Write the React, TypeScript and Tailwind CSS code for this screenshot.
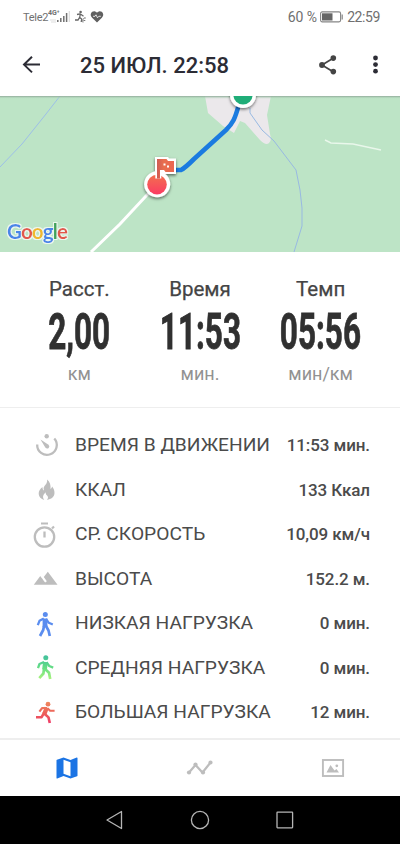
import type { ReactNode } from "react";

function StatusBar() {
  return (
    <div className="h-[34px] pl-[23px] pr-5 flex justify-between items-center text-[#707070]">
      <div className="flex items-center">
        <span className="w-6 text-[11px] leading-none tracking-[-0.3px] whitespace-nowrap">Tele2</span>
        <svg className="w-[84px] h-[34px]" viewBox="47 0 84 34" fill="none">
          <text x="48" y="15" fontSize="7" fontWeight="700" fill="#707070">
            4G⁺
          </text>
          <path d="M50 20h6M51 22h5" stroke="#ddd" />
          <path d="M57.8 22v-2M60.8 22v-4M63.8 22v-6M66.6 22v-9" stroke="#707070" strokeWidth="1.5" />
          <path d="M69.3 22v-11" stroke="#ddd" strokeWidth="1.2" />
          <circle cx="80.6" cy="12" r="1.3" fill="#666" />
          <path
            d="M77 14.5l3-.6 1.5.8 2 1.5M80.3 14l-.6 3.5 2 1.5-.5 3M79.5 17.5l-1.5 2.5h-3"
            stroke="#666"
            strokeWidth="1.3"
          />
          <path d="M83 22.5c-.6-2.500 0-4 1.5-4.5M85 17.2v1.6M83.5 20.5h1.8" stroke="#777" />
          <path
            d="M97 22.5l-4.9-4.8c-3.1-3.2-.3-7.2 3-6.3.9.2 1.5.8 1.9 1.4.4-.6 1-1.2 1.9-1.4 3.3-.9 6.1 3.1 3 6.3z"
            fill="#606060"
          />
          <path d="M93 16.3h2l1-1.5 1.5 3 1.3-1.5h2" stroke="#fff" strokeWidth=".8" />
        </svg>
      </div>
      <div className="flex items-center text-[14px] leading-none">
        <span>60 %</span>
        <svg className="w-[23px] h-3 ml-[3px] mr-1" viewBox="0 0 23 12" fill="none">
          <rect x=".6" y=".9" width="20" height="10" rx="1.6" stroke="#858585" strokeWidth="1.1" />
          <rect x="2" y="2.3" width="10.5" height="7.2" fill="#666" />
          <path d="M22.2 3.5v5" stroke="#858585" strokeWidth="1.2" />
        </svg>
        <span className="tracking-[-0.4px]">22:59</span>
      </div>
    </div>
  );
}

function Header() {
  return (
    <header className="h-[62px] pl-[22px] pr-[19px] flex items-center text-[#2c2c35]">
      <svg className="w-5 h-5" viewBox="0 0 20 20" fill="none" stroke="currentColor" strokeWidth="2">
        <path d="M18 9.6H2M10 1.8L2 9.6l8 7.8" />
      </svg>
      <h1 className="ml-[38px] flex-1 text-[22px] font-medium whitespace-nowrap">25 ИЮЛ. 22:58</h1>
      <svg className="w-[18px] h-5" viewBox="0 0 18 20" fill="#444">
        <path d="M14.5 3L3 10l11.5 7" fill="none" stroke="#444" strokeWidth="1.7" />
        <circle cx="14.3" cy="3.1" r="2.8" />
        <circle cx="3" cy="10" r="2.9" />
        <circle cx="14.3" cy="16.6" r="2.8" />
      </svg>
      <svg className="w-3 h-5 ml-[32px]" viewBox="0 0 12 20" fill="currentColor">
        <circle cx="6.5" cy="3" r="2.4" />
        <circle cx="6.5" cy="9.6" r="2.4" />
        <circle cx="6.5" cy="16.2" r="2.4" />
      </svg>
    </header>
  );
}

function RouteMap() {
  return (
    <svg className="block w-full h-[156px]" viewBox="0 96 400 156" fill="none">
      <defs>
        <linearGradient id="finish" x1="0" y1="0" x2="0" y2="1">
          <stop offset="0" stopColor="#f2704f" />
          <stop offset="1" stopColor="#fb3c63" />
        </linearGradient>
        <linearGradient id="flag" x1="0" y1="0" x2="1" y2="0">
          <stop offset="0" stopColor="#cf5c55" />
          <stop offset=".4" stopColor="#e96f4e" />
          <stop offset="1" stopColor="#ea6550" />
        </linearGradient>
        <filter id="shadow" x="-50%" y="-50%" width="200%" height="200%">
          <feDropShadow dx="0" dy="1.5" stdDeviation="1.6" floodOpacity="0.55" />
        </filter>
        <filter id="glow" x="-10%" y="-20%" width="120%" height="140%">
          <feMorphology in="SourceAlpha" operator="dilate" radius="1" result="wide" />
          <feFlood floodColor="#f1faf3" floodOpacity=".9" />
          <feComposite in2="wide" operator="in" />
          <feMerge>
            <feMergeNode />
            <feMergeNode in="SourceGraphic" />
          </feMerge>
        </filter>
        <linearGradient id="edge" x1="0" y1="0" x2="0" y2="1">
          <stop offset="0" stopColor="#8fa898" />
          <stop offset="1" stopColor="#bde4c6" stopOpacity="0" />
        </linearGradient>
      </defs>
      <path d="M0 96h400v156H0z" fill="#bde4c6" />
      <path d="M205 96l3 17 15 13 11 7 6-12 5 2 15 17q6 6 9 3 3-2 1-9l-3-19 4-19z" fill="#ebe8eb" />
      <path d="M60 96L46 114 22 144 0 167" stroke="#9dbfe8" />
      <path d="M250 108v5l12 17 12 11 22 29 4 20 2 18v18l-8 26" stroke="#98b9e2" />
      <path d="M325 140l6 3 22 1 28 6" stroke="#e9f7eb" strokeWidth="1.4" />
      <path d="M91 252l29-28 26-28 14-14" stroke="#fff" strokeWidth="3" />
      <path
        d="M239 104c-4 15-6 19-13 26l-32 29q-9 9-13 11h-12"
        stroke="#1b7be0"
        strokeWidth="4.6"
        strokeLinejoin="round"
      />
      <path d="M0 96h400v3H0z" fill="url(#edge)" />
      <g filter="url(#shadow)">
        <circle cx="243" cy="95" r="13" fill="#fff" />
        <circle cx="157.2" cy="184.3" r="13" fill="#fff" />
        <path d="M155 157h13l1 1.5h7v15.5h-13l-1.5-2v6h-6.5z" fill="#fff" />
      </g>
      <circle cx="243" cy="95" r="9.6" fill="#20ad78" />
      <circle cx="157" cy="184.6" r="9.8" fill="url(#finish)" />
      <path d="M155.300 158h6v20.5h-6z" fill="#fff" />
      <path d="M157 159h9.5l1.5 2h6v11h-8.5l-1.5-2h-4v8.5h-3z" fill="url(#flag)" />
      <path d="M163.5 163.5h2v2h-2zM167 165.5h2v2h-2z" fill="#fff" />
      <text
        x="7"
        y="239"
        fontFamily="Lato, sans-serif"
        fontSize="20.5"
        fontWeight="700"
        letterSpacing="-.85"
        filter="url(#glow)"
      >
        <tspan fill="#4a86e8">G</tspan>
        <tspan fill="#e2584c">o</tspan>
        <tspan fill="#efb92d">o</tspan>
        <tspan fill="#4a86e8">g</tspan>
        <tspan fill="#3fa35c">l</tspan>
        <tspan fill="#e2584c">e</tspan>
      </text>
    </svg>
  );
}

const totals = [
  { label: "Расст.", value: "2,00", unit: "км" },
  { label: "Время", value: "11:53", unit: "мин." },
  { label: "Темп", value: "05:56", unit: "мин/км" },
];

function Totals() {
  return (
    <section className="h-[156px] px-[19px] pt-[23px] grid grid-cols-3 text-center border-b border-[#eee]">
      {totals.map((total) => (
        <div key={total.label} className="flex flex-col items-center">
          <span className="text-[20.5px] leading-7 text-[#444] [-webkit-text-stroke:0.25px_#444]">{total.label}</span>
          <span className="h-[58px] leading-[58px] text-[50px] font-bold text-[#303030] scale-x-[0.63] [-webkit-text-stroke:0.8px_#303030]">
            {total.value}
          </span>
          <span className="text-[18px] leading-[25px] text-[#929292]">{total.unit}</span>
        </div>
      ))}
    </section>
  );
}

const moving = (
  <>
    <path d="M24.3 7.5A9.8 9.8 0 1 1 7.2 13.5" fill="none" stroke="#bdbdbd" strokeWidth="2.3" />
    <circle cx="16.7" cy="5.2" r="2.2" fill="#bdbdbd" />
    <path d="M10.5 8.500l8 5.2q1.600 1.500.2 3.200-1.800 1.200-3.400-.4z" fill="#bdbdbd" />
  </>
);

const flame = (
  <path
    d="M17.2 4.5c.2 3.5-1.3 4.7-2.7 6.6-1.2 1.6-1 3-.4 4.3-1.3-.6-1.8-2-1.6-3.5-2.5 2-4 4.3-3.8 7.1.2 3.1 2.3 5.1 5.5 5.9-2.2-2.7-1-5.3 1.5-7.6 0 1.7.3 2.6 1.6 3.5 1.1 1 .9 2.8-.3 4.1 4.3-.6 7.3-3 7.5-6.9.1-2.8-1.2-4.7-2.4-6.4-.2 1.2-.7 2-1.6 2.4.4-3.6-.5-7.200-3.300-9.500z"
    fill="#bdbdbd"
  />
);

const stopwatch = (
  <g fill="none" stroke="#bdbdbd">
    <circle cx="14.5" cy="17" r="9.7" strokeWidth="2.3" />
    <path d="M11 3.5h7M22 8.5l2-2" strokeWidth="2.2" />
    <path d="M14.5 11.5v6" strokeWidth="2.3" />
  </g>
);

const mountains = (
  <path
    transform="translate(2.7 1.2) scale(1.08)"
    d="M14 6l-3.75 5 2.85 3.8-1.6 1.2C9.81 13.75 7 10 7 10l-6 8h22L14 6z"
    fill="#bdbdbd"
  />
);

const walk = (
  <g fill="none" stroke="#5b8def" strokeLinejoin="round">
    <circle cx="15.3" cy="5.4" r="2.5" fill="#5b8def" stroke="none" />
    <path d="M15 9.5v8.5" strokeWidth="4.8" />
    <path d="M13.8 9.5L9.5 11.8l-1.7 4.3M16 9.8l2.8 4 4 1.7" strokeWidth="2.3" />
    <path d="M14 17l-.8 4-3.2 6M16 17l2.5 4.5 1.3 5.5" strokeWidth="2.7" />
  </g>
);

const stroll = (
  <g fill="none" stroke="url(#medium)" strokeLinejoin="round">
    <defs>
      <linearGradient id="medium" gradientUnits="userSpaceOnUse" x1="0" y1="4" x2="0" y2="27">
        <stop offset="0" stopColor="#45c39b" />
        <stop offset=".5" stopColor="#68df83" />
        <stop offset="1" stopColor="#aff47c" />
      </linearGradient>
    </defs>
    <circle cx="15.8" cy="4.8" r="2.5" fill="url(#medium)" stroke="none" />
    <path d="M15.5 9l-1 7.5" strokeWidth="4.8" />
    <path d="M14 9l-4.5 2-1.5 4.2M16.5 9.3l2.7 3.7 4 1.6" strokeWidth="2.3" />
    <path d="M14 16l-.6 4.5-4.1 4.6M15 16l4 3.7 1.2 6.2" strokeWidth="2.7" />
  </g>
);

const run = (
  <g fill="none" stroke="url(#high)" strokeLinejoin="round">
    <defs>
      <linearGradient id="high" gradientUnits="userSpaceOnUse" x1="0" y1="4" x2="0" y2="25">
        <stop offset="0" stopColor="#ef8960" />
        <stop offset=".5" stopColor="#ec6259" />
        <stop offset="1" stopColor="#ef3c68" />
      </linearGradient>
    </defs>
    <circle cx="18" cy="6.2" r="2.4" fill="url(#high)" stroke="none" />
    <path d="M16.8 9.5l-2.5 6.5" strokeWidth="4.4" />
    <path d="M17 10h-4.8l-2.8 3.7M17.5 10.2l2.6 2.5h4.5" strokeWidth="2.1" />
    <path d="M14 15l-2.4 4.2H6M14.5 15.8l4 3.6 1.3 5.6" strokeWidth="2.6" />
  </g>
);

const details: { icon: ReactNode; label: string; value: string }[] = [
  { icon: moving, label: "ВРЕМЯ В ДВИЖЕНИИ", value: "11:53 мин." },
  { icon: flame, label: "ККАЛ", value: "133 Ккал" },
  { icon: stopwatch, label: "СР. СКОРОСТЬ", value: "10,09 км/ч" },
  { icon: mountains, label: "ВЫСОТА", value: "152.2 м." },
  { icon: walk, label: "НИЗКАЯ НАГРУЗКА", value: "0 мин." },
  { icon: stroll, label: "СРЕДНЯЯ НАГРУЗКА", value: "0 мин." },
  { icon: run, label: "БОЛЬШАЯ НАГРУЗКА", value: "12 мин." },
];

function Details() {
  return (
    <ul className="h-[330px] pt-[15.5px] pl-[30px] pr-[30px]">
      {details.map((detail) => (
        <li key={detail.label} className="h-[44.5px] flex items-center text-[#4b4b4b]">
          <svg className="w-[30px] h-[30px]" viewBox="0 0 30 30">
            {detail.icon}
          </svg>
          <span className="ml-[15px] flex-1 text-[19.2px] whitespace-nowrap">{detail.label}</span>
          <span className="text-[17px] font-medium tracking-[-0.1px] whitespace-nowrap">{detail.value}</span>
        </li>
      ))}
    </ul>
  );
}

function Tabs() {
  return (
    <nav className="h-[58px] grid grid-cols-3 items-center justify-items-center border-t-2 border-[#eee]">
      <svg className="w-7 h-7" viewBox="0 0 24 24" fill="#1b74e4">
        <path d="M20.5 3l-.16.03L15 5.1 9 3 3.36 4.9c-.21.07-.36.25-.36.48V20.5c0 .28.22.5.5.5l.16-.03L9 18.9l6 2.1 5.64-1.9c.21-.07.36-.25.36-.48V3.5c0-.28-.22-.5-.5-.5zM15 19l-6-2.11V5l6 2.11V19z" />
      </svg>
      <svg className="w-7 h-7" viewBox="0 0 28 28" fill="#bdbdbd">
        <path d="M3 18.5L9.5 11l7 7.5 8-10" fill="none" stroke="#bdbdbd" strokeWidth="2.2" />
        <circle cx="3" cy="18.5" r="2.1" />
        <circle cx="9.5" cy="10.5" r="2.1" />
        <circle cx="17" cy="18.5" r="2.1" />
        <circle cx="24.5" cy="8.5" r="2.1" />
      </svg>
      <svg className="w-7 h-7" viewBox="0 0 28 28" fill="#bdbdbd">
        <rect x="3.9" y="6" width="20.2" height="16" fill="none" stroke="#bdbdbd" strokeWidth="1.9" />
        <path d="M7.5 18.5l4-7.5 4 5.5 2-1.5 2.5 3.5z" />
        <circle cx="17.8" cy="11.8" r="1.4" />
      </svg>
    </nav>
  );
}

function SystemNav() {
  return (
    <div className="h-12 bg-black flex justify-center">
      <svg className="w-[200px] h-12" viewBox="100 796 200 48" fill="none" stroke="#b5b5b5" strokeWidth="1.3">
        <path d="M121.5 811.5v17l-14.5-8.5z" strokeLinejoin="round" />
        <circle cx="200" cy="820" r="8.6" />
        <rect x="277" y="812.2" width="15.6" height="15.6" rx=".5" />
      </svg>
    </div>
  );
}

export default function App() {
  return (
    <div className="w-[400px] h-[844px] bg-white overflow-hidden font-[Roboto,sans-serif]">
      <StatusBar />
      <Header />
      <RouteMap />
      <Totals />
      <Details />
      <Tabs />
      <SystemNav />
    </div>
  );
}
